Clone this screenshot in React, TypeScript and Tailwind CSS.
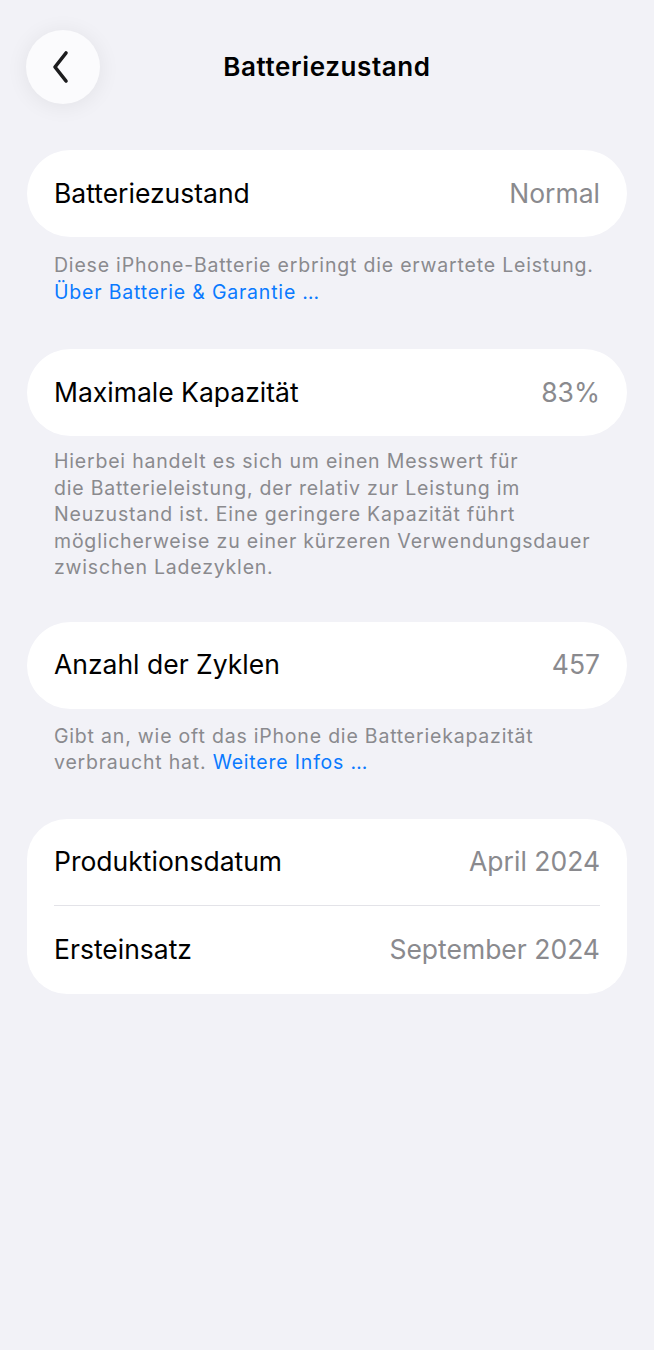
export default function App() {
  const font = { fontFamily: 'Inter, "Noto Sans", sans-serif' };
  return (
    <div className="min-h-[1350px] w-full bg-[#f2f2f7] text-black" style={font}>
      {/* Header */}
      <div className="relative flex h-[134px] items-start px-[26px] pt-[30px]">
        <button className="flex h-[74px] w-[74px] items-center justify-center rounded-full bg-[#fbfbfd] shadow-[0_2px_22px_rgba(0,0,0,0.07)]">
          <svg width="18" height="34" viewBox="0 0 18 34" fill="none" className="-ml-[4px]">
            <path d="M14 3 L3 17 L14 31" stroke="#1c1c1e" strokeWidth="3.6" strokeLinecap="round" strokeLinejoin="round" />
          </svg>
        </button>
        <div className="absolute left-0 right-0 top-[50px] text-center text-[26px] font-semibold leading-[34px] tracking-[0.6px]">
          Batteriezustand
        </div>
      </div>

      <div className="px-[27px] pt-[16px]">
        {/* Section 1 */}
        <div className="flex h-[87px] items-center justify-between rounded-[44px] bg-white px-[27px] text-[26.5px]">
          <span>Batteriezustand</span>
          <span className="text-[#8a8a8e]">Normal</span>
        </div>
        <p className="mt-[15px] whitespace-nowrap px-[27px] text-[19.5px] leading-[26.5px] tracking-[0.8px] text-[#8a8a8e]">
          Diese iPhone-Batterie erbringt die erwartete Leistung.
          <br />
          <span className="text-[#0a7aff]">Über Batterie &amp; Garantie …</span>
        </p>

        {/* Section 2 */}
        <div className="mt-[44px] flex h-[87px] items-center justify-between rounded-[44px] bg-white px-[27px] text-[26.5px]">
          <span>Maximale Kapazität</span>
          <span className="text-[#8a8a8e]">83%</span>
        </div>
        <p className="mt-[12px] whitespace-nowrap px-[27px] text-[19.5px] leading-[26.5px] tracking-[0.8px] text-[#8a8a8e]">
          Hierbei handelt es sich um einen Messwert für
          <br />
          die Batterieleistung, der relativ zur Leistung im
          <br />
          Neuzustand ist. Eine geringere Kapazität führt
          <br />
          möglicherweise zu einer kürzeren Verwendungsdauer
          <br />
          zwischen Ladezyklen.
        </p>

        {/* Section 3 */}
        <div className="mt-[41px] flex h-[87px] items-center justify-between rounded-[44px] bg-white px-[27px] text-[26.5px]">
          <span>Anzahl der Zyklen</span>
          <span className="text-[#8a8a8e]">457</span>
        </div>
        <p className="mt-[14px] whitespace-nowrap px-[27px] text-[19.5px] leading-[26.5px] tracking-[0.8px] text-[#8a8a8e]">
          Gibt an, wie oft das iPhone die Batteriekapazität
          <br />
          verbraucht hat. <span className="text-[#0a7aff]">Weitere Infos …</span>
        </p>

        {/* Section 4 */}
        <div className="mt-[43px] rounded-[40px] bg-white px-[27px] text-[26.5px]">
          <div className="flex h-[87px] items-center justify-between border-b border-[#e3e3e8]">
            <span>Produktionsdatum</span>
            <span className="text-[#8a8a8e]">April 2024</span>
          </div>
          <div className="flex h-[88px] items-center justify-between">
            <span>Ersteinsatz</span>
            <span className="text-[#8a8a8e]">September 2024</span>
          </div>
        </div>
      </div>
    </div>
  );
}
